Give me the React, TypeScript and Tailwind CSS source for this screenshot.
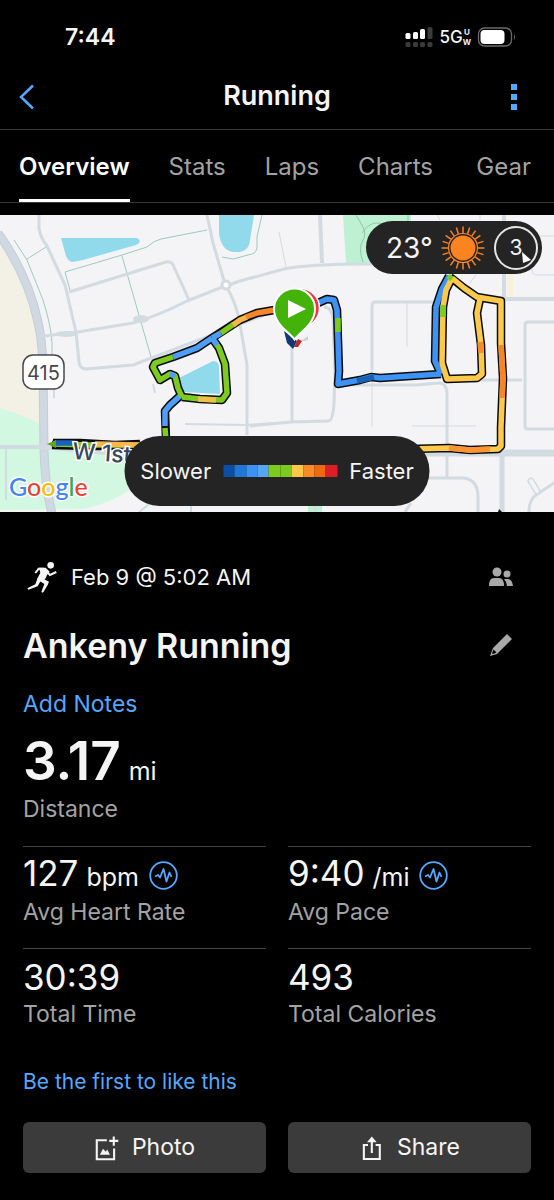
import React, { useState } from 'react';

type RouteSegment = { d: string; color: string };

const tabs = ['Overview', 'Stats', 'Laps', 'Charts', 'Gear'];

const stats = [
  { value: '127', unit: 'bpm', label: 'Avg Heart Rate', chart: true },
  { value: '9:40', unit: '/mi', label: 'Avg Pace', chart: true },
  { value: '30:39', unit: '', label: 'Total Time', chart: false },
  { value: '493', unit: '', label: 'Total Calories', chart: false },
];

const legendColors = [
  'bg-[#0b4ea6]',
  'bg-[#1f77d6]',
  'bg-[#3d93f5]',
  'bg-[#55a6ff]',
  'bg-[#7dcb1f]',
  'bg-[#7dcb1f]',
  'bg-[#fdc94a]',
  'bg-[#fb8b27]',
  'bg-[#ee6a10]',
  'bg-[#dc1f26]',
];

// Black casing drawn under the coloured pace segments
const routeOutline = [
  'M53 443L60 443L80 443L115 445L140 444',
  'M52 445L90 446L140 446',
  'M166 440L165 411L170 405L180 396',
  'M182 397L178 388L175 376L170 374L160 380L153 367L155 363L173 357L197 348L212 338L240 320L257 313L280 309',
  'M212 338L219 348L225 364L227 393L222 400L200 399L182 397',
  'M318 303L327 299L334 300L337 310L339 371L338 384L360 380L371 377L380 378L441 374',
  'M441 374L435 361L436 307L442 289L449 276',
  'M452 278L446 290L443 307L442 363L447 379L477 378L482 374L481 345L477 313L480 299',
  'M450 277L464 288L477 297L501 301L501 343L503 378L501 427L501 446L498 449L470 450L449 448L410 449',
];

const routeSegments: RouteSegment[] = [
  { d: 'M53 444L90 445L140 445', color: '#7dcb1f' },
  { d: 'M95 444L140 445', color: '#fdb54e' },
  { d: 'M55 443L72 443', color: '#1a62bd' },
  { d: 'M166 440L165 428', color: '#7dcb1f' },
  { d: 'M165 426L165 411L170 405L180 396', color: '#4c9ef8' },
  { d: 'M182 397L178 388L175 376L170 374L160 380L153 367L155 363L173 357', color: '#7dcb1f' },
  { d: 'M175 376L170 374', color: '#4c9ef8' },
  { d: 'M173 357L197 348L212 338', color: '#4c9ef8' },
  { d: 'M212 338L219 348L225 364L227 393L222 400L200 399L182 397', color: '#7dcb1f' },
  { d: 'M212 338L217 345', color: '#4c9ef8' },
  { d: 'M216 400L198 399', color: '#edc04a' },
  { d: 'M212 338L221 333', color: '#4c9ef8' },
  { d: 'M221 333L234 324', color: '#7dcb1f' },
  { d: 'M233 325L240 320L247 317', color: '#f4b843' },
  { d: 'M246 317L257 313L280 309', color: '#f5852a' },
  { d: 'M318 303L327 299L334 300L337 310L339 371L338 384L360 380L371 377L380 378L441 374', color: '#3d93f5' },
  { d: 'M338 318L338 332', color: '#7dcb1f' },
  { d: 'M357 381L374 377', color: '#1762b8' },
  { d: 'M441 374L435 361L436 307L442 289L449 276', color: '#3d93f5' },
  { d: 'M452 278L446 290L443 307L442 363L447 379L477 378L482 374L481 345L477 313L480 299', color: '#fdc94a' },
  { d: 'M443 305L443 317', color: '#7dcb1f' },
  { d: 'M480 342L481 353', color: '#f58a2d' },
  { d: 'M452 278L464 288L477 297L501 301L501 343L503 378L501 427L501 446L498 449L470 450L449 448L410 449', color: '#fdc94a' },
  { d: 'M501 345L503 378L502 398', color: '#f5852a' },
  { d: 'M449 448L470 450L490 449', color: '#fb9330' },
  { d: 'M448 276L452 279', color: '#7dcb1f' },
];

const StatusBar = () => (
  <div className="flex h-16 items-center justify-between pt-2.5 pr-[37px] pl-[65px]">
    <span className="text-[23px] leading-7 font-semibold">7:44</span>
    <div className="flex items-center gap-1.5">
      <svg className="h-5 w-7" viewBox="0 0 28 20" aria-hidden="true">
        <g fill="#fff">
          <rect x="0.5" y="6" width="5" height="6" rx="1.5" />
          <rect x="8" y="5" width="5" height="7" rx="1.5" />
          <rect x="15" y="2" width="5" height="10" rx="1.5" />
        </g>
        <g fill="#3a3a3c">
          <rect x="22.5" y="0" width="5" height="12" rx="1.5" />
          <rect x="0.5" y="15" width="5" height="5" rx="1.5" />
          <rect x="8" y="15" width="5" height="5" rx="1.5" />
          <rect x="15" y="15" width="5" height="5" rx="1.5" />
          <rect x="22.5" y="15" width="5" height="5" rx="1.5" />
        </g>
      </svg>
      <div className="flex items-center">
        <span className="text-[17px] leading-5 font-medium">5G</span>
        <span className="flex flex-col items-center text-[8px] leading-[10px] font-bold">
          <span>U</span>
          <span>W</span>
        </span>
      </div>
      <svg className="h-5 w-10" viewBox="0 0 40 20" aria-hidden="true">
        <rect x="1.5" y="1" width="33" height="18" rx="6" fill="none" stroke="#6b6b6b" strokeWidth="1.3" />
        <rect x="3.5" y="3" width="24" height="14" rx="4" fill="#fff" />
        <path d="M37 7Q39 10 37 13Z" fill="#6b6b6b" />
      </svg>
    </div>
  </div>
);

const RouteMap = () => (
  <svg className="block w-full" viewBox="0 215 554 297" role="img" aria-label="Route map">
    <rect y="215" width="554" height="297" fill="#f4f3f5" />

    {/* Land and water */}
    <path d="M0 235L22 276L36 320L41 355L42 425L0 408Z" fill="#f3f0e5" />
    <path d="M0 408Q20 414 42 425V447H0Z" fill="#d2f8e2" />
    <path d="M0 447H44L132 456V488Q112 503 84 509L0 510Z" fill="#d2f8e2" />
    <path d="M343 215H411V268L346 263Z" fill="#bef1d2" />
    <path d="M308 504H322V512H308Z" fill="#bef1d2" />
    <path d="M507 270H513V297H507Z" fill="#f8f1da" />
    <g fill="#90daec">
      <path d="M61 238L137 238Q143 241 136 245L83 260L72 262Q68 261 66 256Z" />
      <path d="M219 215V234Q222 252 235 252Q249 253 250 240L254 215Z" />
      <path d="M179 378L205 365L213 361Q219 361 219 367L220 394L184 392Z" />
    </g>

    {/* Footpaths */}
    <g fill="none" stroke="#9ccdb6" strokeWidth="1">
      <path d="M14 240L27 260L43 300Q51 325 52 343V355" />
      <path d="M27 259L46 247M70 290L65 272L122 255L147 247Q155 240 161 239L207 230" />
      <path d="M122 256L151 357" />
      <path d="M262 215L257 237V248Q256 254 248 255L233 259L222 257" />
      <path d="M356 215L362 225Q367 234 363 240Q358 248 363 262M362 233Q372 217 387 226H400M408 215V224" stroke="#8fc5a8" />
    </g>

    {/* Roads */}
    <g fill="none" stroke="#d3dbe2" strokeLinejoin="round">
      <path d="M-2 233Q28 275 38 322Q42 340 43 365L44 450Q45 485 52 514" stroke="#c3ced8" strokeWidth="9" />
      <path d="M-2 233Q28 275 38 322Q42 340 43 365L44 450Q45 485 52 514" stroke="#d0d9e1" strokeWidth="7" />
      <path d="M39 215V228Q40 237 47 246L65 285L76 332L79 362Q80 369 86 369L133 365L272 312" strokeWidth="3" />
      <path d="M69 292L166 262Q172 261 174 267L189 300" strokeWidth="3" />
      <path d="M44 336L78 332L133 323Q160 315 187 301L220 288L240 281L284 269Q310 264 367 264H420" strokeWidth="3" />
      <path d="M207 215L213 243L225 284Q238 305 241 330L247 365V435" strokeWidth="3" />
      <path d="M279 232L286 267M435 211L440 220M480 215V220M469 284L476 275" strokeWidth="1" />
      <path d="M320 215L322 263M504 215V300M504 299H554" strokeWidth="4" />
      <path d="M434 302H376Q372 302 372 306V370" strokeWidth="3" />
      <path d="M372 370V427M407 303V347M412 426H476" strokeWidth="1" />
      <path d="M324 307Q332 307 333 320L335 375L334 403Q333 421 328 421L291 422L250 426M292 345V422" strokeWidth="3" />
      <path d="M339 385H417L438 383Q446 382 447 393V477" strokeWidth="3" />
      <path d="M477 380H522M554 322H528Q525 322 525 325V426Q525 429 528 429H554" strokeWidth="3" />
      <path d="M532 265V270Q532 275 538 275H554M534 236H554" strokeWidth="1" />
      <path d="M400 453H554" strokeWidth="7" />
      <path d="M0 447H44Q80 451 130 455" strokeWidth="4" />
      <path d="M502 455V512" strokeWidth="5" />
      <path d="M420 478H464Q478 480 478 497V512M411 503L405 512M554 483L536 495Q529 500 529 512" strokeWidth="3" />
      <path d="M531 481L537 491" strokeWidth="7" strokeLinecap="round" />
      <path d="M185 424L247 425L274 423M139 512L152 502M191 506V512M6 448V500M54 388V398M153 384L155 393M315 504V512" strokeWidth="2" />
      <path d="M531 481L537 491" stroke="#f4f3f5" strokeWidth="4" strokeLinecap="round" />
    </g>
    <ellipse cx="66" cy="334" rx="11" ry="3" fill="#d3dbe2" />
    <ellipse cx="141" cy="319" rx="8" ry="4" fill="#d3dbe2" />
    <circle cx="226" cy="285" r="4" fill="#fff" stroke="#d3dbe2" strokeWidth="3" />

    {/* Highway shield */}
    <rect x="23" y="355" width="41" height="34" rx="10" fill="#fff" stroke="#47474a" strokeWidth="1.5" />
    <text x="43.5" y="380" textAnchor="middle" className="font-['Inter'] text-[20px]" fill="#47474a">
      415
    </text>

    {/* Route */}
    <g fill="none" strokeLinejoin="round">
      {routeOutline.map((d) => (
        <path key={d} d={d} stroke="#0c0c0c" strokeWidth="8.5" />
      ))}
      {routeSegments.map(({ d, color }) => (
        <path key={d} d={d} stroke={color} strokeWidth="5.5" />
      ))}
    </g>
    <path d="M47 444L56 440V448Z" fill="#63a51b" />
    <path d="M499 509L502 512H498Z" fill="#111" />

    <text
      x="72"
      y="459"
      transform="rotate(4 72 459)"
      className="font-['Inter'] text-[23px] font-medium"
      fill="#39475d"
      stroke="#fff"
      strokeWidth="3"
      paintOrder="stroke"
    >
      W 1st
    </text>
    <text
      x="9"
      y="496"
      className="font-['Lato'] text-[25px] font-medium"
      stroke="#fff"
      strokeWidth="3"
      paintOrder="stroke"
    >
      <tspan fill="#4285f4">G</tspan>
      <tspan fill="#ea4335">o</tspan>
      <tspan fill="#fbbc05">o</tspan>
      <tspan fill="#4285f4">g</tspan>
      <tspan fill="#34a853">l</tspan>
      <tspan fill="#ea4335">e</tspan>
    </text>

    {/* Start and finish pins */}
    <path d="M284 331L287 343L293 349L297 341Z" fill="#123a70" />
    <path d="M294 347L298 339L302 341L298 347Z" fill="#c4222b" />
    <path d="M300 342L308 336V340Z" fill="#aaa" opacity=".5" />
    <circle cx="300" cy="308" r="19.5" fill="#f0343c" stroke="#fff" strokeWidth="1.5" />
    <path
      d="M294.5 339.5C289 332 274 324 274 309A20.5 20.5 0 0 1 315 309C315 324 300 332 294.5 339.5Z"
      fill="#43b309"
      stroke="#fff"
      strokeWidth="2"
    />
    <path d="M288 300L306 309L288 318Z" fill="#fff" />
  </svg>
);

const SunIcon = () => (
  <svg className="h-11 w-11" viewBox="-22 -22 44 44" aria-hidden="true">
    <circle r="12.5" fill="#fb8420" />
    <circle r="14.5" fill="none" stroke="#fb8420" strokeWidth="1.2" />
    {Array.from({ length: 20 }, (_, i) => (
      <path key={i} d="M0 -15V-21.5" stroke="#fb8420" strokeWidth="1.5" transform={`rotate(${i * 18})`} />
    ))}
  </svg>
);

const WeatherBadge = () => (
  <div className="absolute top-1.5 right-3 flex h-[53px] w-[176px] items-center justify-between rounded-full bg-[#242424] pr-1 pl-5">
    <span className="text-[28px] leading-8">23°</span>
    <SunIcon />
    <div className="relative flex h-11 w-11 items-center justify-center rounded-full border-2 border-[#e5e5e5]">
      <span className="text-[21px] leading-6">3</span>
      <svg className="absolute right-1 bottom-1 h-3 w-3" viewBox="0 0 12 12" aria-hidden="true">
        <path d="M2 0L11 8L3 11Z" fill="#fff" />
      </svg>
    </div>
  </div>
);

const PaceLegend = () => (
  <div className="absolute bottom-1.5 left-1/2 flex h-[70px] w-[305px] -translate-x-1/2 items-center justify-center gap-3 rounded-full bg-[#242424] text-[22px]">
    <span>Slower</span>
    <div className="grid h-3 w-[114px] shrink-0 grid-cols-10">
      {legendColors.map((color, i) => (
        <div key={i} className={color} />
      ))}
    </div>
    <span>Faster</span>
  </div>
);

const RunnerIcon = () => (
  <svg className="h-8 w-[30px]" viewBox="80 62 90 96" fill="none" stroke="#f5f5f5" aria-hidden="true">
    <circle cx="151" cy="75" r="10" fill="#f5f5f5" stroke="none" />
    <path d="M116 82L136 82L148 94L140 104L136 114L126 124L110 117L120 97Z" fill="#f5f5f5" stroke="none" />
    <path d="M130 85H115L105 98" strokeWidth="6" />
    <path d="M138 93L149 104L168 95" strokeWidth="6" />
    <path d="M119 110L146 124L142 134L128 157L123 155L132 131L114 120Z" fill="#f5f5f5" stroke="none" />
    <path d="M112 113L123 118L112 138L84 148L81 144L105 132Z" fill="#f5f5f5" stroke="none" />
  </svg>
);

const PulseIcon = () => (
  <svg className="h-[29px] w-[29px]" viewBox="0 0 29 29" fill="none" stroke="#54a8ff" aria-hidden="true">
    <circle cx="14.5" cy="14.5" r="13.3" strokeWidth="1.8" />
    <path
      d="M6 15.5L9 14L11 16.5L14.5 8L17.5 20.500L20.500 11.500L22.500 16"
      strokeWidth="1.8"
      strokeLinejoin="round"
    />
  </svg>
);

const App: React.FC = () => {
  const [activeTab, setActiveTab] = useState('Overview');

  return (
    <div className="min-h-screen bg-black font-['Inter',sans-serif] text-[#f5f5f5]">
      <StatusBar />

      <header className="flex h-[66px] items-center justify-between border-b border-[#383838] px-[19px]">
        <button type="button" aria-label="Back" className="flex h-10 w-10 items-center">
          <svg className="h-[26px] w-4" viewBox="0 0 16 26" fill="none" stroke="#54a8ff" strokeWidth="2.5">
            <path d="M14 1.5L2 13L14 24.5" />
          </svg>
        </button>
        <h1 className="text-[27px] font-semibold">Running</h1>
        <button type="button" aria-label="More options" className="flex h-10 w-10 items-center justify-end">
          <svg className="mr-[18px] h-[26px] w-1.5" viewBox="0 0 6 26" fill="#54a8ff">
            <rect width="6" height="6" />
            <rect y="10" width="6" height="6" />
            <rect y="20" width="6" height="6" />
          </svg>
        </button>
      </header>

      <nav className="flex h-[73px] gap-[39px] border-b border-[#383838] pr-[23px] pl-[19px] text-[24px]">
        {tabs.map((tab) => (
          <button
            key={tab}
            type="button"
            onClick={() => setActiveTab(tab)}
            className={
              tab === activeTab
                ? 'border-b-3 border-white pt-1 font-semibold text-white last:ml-auto'
                : 'border-b-3 border-transparent pt-1 text-[#a3a3a3] last:ml-auto'
            }
          >
            {tab}
          </button>
        ))}
      </nav>

      <section className="relative mt-3">
        <RouteMap />
        <WeatherBadge />
        <PaceLegend />
      </section>

      <main className="px-[23px] pt-[45px] pb-7">
        <div className="flex h-10 items-center">
          <div className="ml-1 flex items-center gap-3.5">
            <RunnerIcon />
            <span className="text-[22px]">Feb 9 @ 5:02 AM</span>
          </div>
          <svg className="mr-[18px] ml-auto h-5 w-6" viewBox="0 0 24 20" fill="#a9a9a9" role="img" aria-label="Visible to connections">
            <circle cx="8" cy="5" r="4.5" />
            <path d="M0 19Q0 11 5 11H10Q15 11 15 19Z" />
            <circle cx="18" cy="7" r="3.5" />
            <path d="M15 12H19Q23 12 24 19H18Q18 15 15 12Z" />
          </svg>
        </div>

        <div className="mt-[26px] flex h-11 items-center justify-between">
          <h2 className="text-[34px] font-semibold">Ankeny Running</h2>
          <button type="button" aria-label="Edit title" className="mr-[18px]">
            <svg className="h-6 w-6" viewBox="0 0 24 24" fill="#a9a9a9">
              <path d="M18 1L23 6L8 21L1 23L4 15Z" />
              <path d="M4.5 16.5L7.5 19.5L4 21L3 20.5Z" fill="#000" />
            </svg>
          </button>
        </div>

        <button type="button" className="mt-5 block h-8 text-[23px] text-[#54a8ff]">
          Add Notes
        </button>

        <div className="mt-3.5 flex h-14 items-baseline gap-2 leading-14">
          <span className="text-[53px] font-semibold">3.17</span>
          <span className="text-[25px]">mi</span>
        </div>
        <p className="mt-1.5 text-[23px] leading-7 text-[#a3a3a3]">Distance</p>

        <div className="mt-[23px] grid grid-cols-2 gap-x-[22px]">
          {stats.map(({ value, unit, label, chart }) => (
            <div key={label} className="h-[102px] border-t border-[#444] pt-1.5">
              <div className="flex h-11 items-center gap-2.5">
                <p className="text-[35px] leading-11">
                  {value}
                  {unit && <span className="ml-2 text-[25px]">{unit}</span>}
                </p>
                {chart && <PulseIcon />}
              </div>
              <p className="text-[23px] leading-[30px] text-[#a3a3a3]">{label}</p>
            </div>
          ))}
        </div>

        <button type="button" className="mt-4 block h-8 text-[21px] text-[#54a8ff]">
          Be the first to like this
        </button>

        <div className="mt-6 grid grid-cols-2 gap-x-[22px] text-[23px]">
          <button type="button" className="flex h-[51px] items-center justify-center gap-3 rounded-md bg-[#3b3b3b]">
            <svg className="h-[26px] w-[26px]" viewBox="268 249 75 75" fill="none" stroke="#f5f5f5" strokeWidth="6" aria-hidden="true">
              <path d="M305 264H276V319H326V288M312 266H338M325 253V280" />
              <path d="M285 306L294 289L302 297L306 291L314 306Z" fill="#f5f5f5" stroke="none" />
            </svg>
            Photo
          </button>
          <button type="button" className="flex h-[51px] items-center justify-center gap-3 rounded-md bg-[#3b3b3b]">
            <svg className="h-[26px] w-[26px]" viewBox="1018 249 75 75" fill="none" stroke="#f5f5f5" strokeWidth="6" aria-hidden="true">
              <path d="M1044 278H1032V318H1078V278H1066M1055 301V264" />
              <path d="M1041 270L1055 253L1069 270Z" fill="#f5f5f5" stroke="none" />
            </svg>
            Share
          </button>
        </div>
      </main>
    </div>
  );
};

export default App;
